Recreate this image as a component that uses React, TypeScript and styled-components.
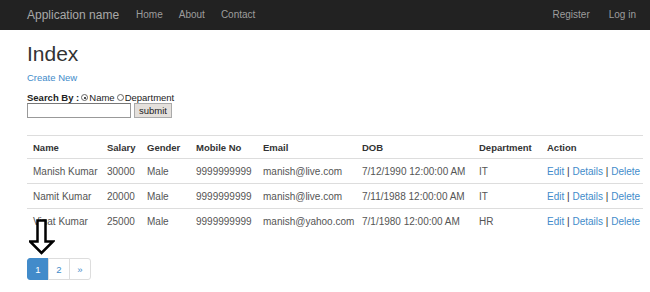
import * as React from 'react';
import styled, { createGlobalStyle } from 'styled-components';

const GlobalStyle = createGlobalStyle`
  body {
    margin: 0;
    background: #fff;
    font-family: "Liberation Sans", Arial, sans-serif;
    color: #333;
  }
`;

const NavBar = styled.div`
  display: flex;
  align-items: center;
  height: 30px;
  background: #222;
  padding: 0 14px 0 27px;
`;

const Brand = styled.span`
  font-size: 12px;
  color: #a9a9a9;
  margin-right: 17px;
`;

const NavLink = styled.span<{ $gap?: number }>`
  font-size: 10px;
  color: #9d9d9d;
  margin-right: ${(p) => p.$gap ?? 16}px;
  margin-top: -2px;
`;

const Spacer = styled.div`
  flex: 1;
`;

const Body = styled.div`
  position: relative;
  padding: 11px 7px 0 27px;
`;

const Title = styled.h1`
  margin: 0;
  font-size: 21px;
  font-weight: 400;
  line-height: 25px;
  color: #333;
`;

const Link = styled.a`
  color: #428bca;
  text-decoration: none;
  font-size: 10px;
`;

const CreateLink = styled(Link)`
  display: block;
  margin-top: 6px;
  line-height: 12px;
  font-size: 9.5px;
`;

const SearchForm = styled.div`
  margin-top: 8px;
  font-family: Arial, "Liberation Sans", sans-serif;
  font-size: 9.5px;
  color: #222;
`;

const SearchLine = styled.div`
  display: flex;
  align-items: center;
  height: 11px;
`;

const Label = styled.b`
  margin-right: 2px;
`;

const Radio = styled.span<{ $checked?: boolean; $gap?: number }>`
  display: inline-block;
  width: 7px;
  height: 7px;
  border: 1px solid #666;
  border-radius: 50%;
  margin: 0 1px 0 ${(p) => p.$gap ?? 0}px;
  position: relative;
  box-sizing: border-box;
  &::after {
    content: '';
    display: ${(p) => (p.$checked ? 'block' : 'none')};
    position: absolute;
    left: 1.5px;
    top: 1.5px;
    width: 2px;
    height: 2px;
    border-radius: 50%;
    background: #111;
  }
`;

const InputRow = styled.div`
  display: flex;
  gap: 3px;
`;

const TextBox = styled.div`
  width: 104px;
  height: 15px;
  box-sizing: border-box;
  border: 1px solid #999;
  border-top-color: #777;
  background: #fff;
`;

const Submit = styled.div`
  width: 38px;
  height: 15px;
  box-sizing: border-box;
  border: 1px solid #aaa;
  background: #e4e0dc;
  font-size: 9.5px;
  color: #222;
  text-align: center;
  line-height: 13px;
`;

const Table = styled.table`
  margin-top: 17px;
  border-collapse: collapse;
  width: 616px;
  table-layout: fixed;
  font-size: 10px;
  border-top: 1px solid #ddd;
`;

const Th = styled.th<{ $w: number }>`
  box-sizing: border-box;
  width: ${(p) => p.$w}px;
  text-align: left;
  font-weight: 700;
  font-size: 9.5px;
  color: #333;
  padding: 0 0 0 6px;
  height: 23px;
  border-bottom: 1px solid #ddd;
  white-space: nowrap;
`;

const Td = styled.td`
  padding: 0 0 0 6px;
  height: 24px;
  color: #555;
  white-space: nowrap;
  overflow: hidden;
`;

const Row = styled.tr<{ $last?: boolean }>`
  border-bottom: ${(p) => (p.$last ? 'none' : '1px solid #ddd')};
`;

const Sep = styled.span`
  color: #333;
`;

const Pager = styled.div`
  display: flex;
  margin-top: 25px;
`;

const PageBtn = styled.div<{ $active?: boolean; $first?: boolean; $last?: boolean }>`
  width: 22px;
  height: 22px;
  box-sizing: border-box;
  display: flex;
  align-items: center;
  justify-content: center;
  font-size: 9.5px;
  background: ${(p) => (p.$active ? '#428bca' : '#fff')};
  color: ${(p) => (p.$active ? '#fff' : '#428bca')};
  border: 1px solid ${(p) => (p.$active ? '#428bca' : '#ddd')};
  margin-left: ${(p) => (p.$first ? 0 : -1)}px;
  border-radius: ${(p) => (p.$first ? '3px 0 0 3px' : p.$last ? '0 3px 3px 0' : '0')};
`;

const Arrow = styled.svg`
  position: absolute;
  left: 29px;
  top: 189px;
`;

const columns = [
  { label: 'Name', w: 74 },
  { label: 'Salary', w: 40 },
  { label: 'Gender', w: 49 },
  { label: 'Mobile No', w: 67 },
  { label: 'Email', w: 99 },
  { label: 'DOB', w: 117 },
  { label: 'Department', w: 68 },
  { label: 'Action', w: 102 },
];

const rows = [
  ['Manish Kumar', '30000', 'Male', '9999999999', 'manish@live.com', '7/12/1990 12:00:00 AM', 'IT'],
  ['Namit Kumar', '20000', 'Male', '9999999999', 'manish@live.com', '7/11/1988 12:00:00 AM', 'IT'],
  ['Vinat Kumar', '25000', 'Male', '9999999999', 'manish@yahoo.com', '7/1/1980 12:00:00 AM', 'HR'],
];

export default function App() {
  return (
    <>
      <GlobalStyle />
      <NavBar>
        <Brand>Application name</Brand>
        <NavLink>Home</NavLink>
        <NavLink>About</NavLink>
        <NavLink>Contact</NavLink>
        <Spacer />
        <NavLink $gap={19}>Register</NavLink>
        <NavLink $gap={0}>Log in</NavLink>
      </NavBar>
      <Body>
        <Title>Index</Title>
        <CreateLink>Create New</CreateLink>
        <SearchForm>
          <SearchLine>
            <Label>Search By :</Label>
            <Radio $checked />
            Name
            <Radio $gap={2} />
            Department
          </SearchLine>
          <InputRow>
            <TextBox />
            <Submit>submit</Submit>
          </InputRow>
        </SearchForm>
        <Table>
          <thead>
            <tr>
              {columns.map((c) => (
                <Th key={c.label} $w={c.w}>
                  {c.label}
                </Th>
              ))}
            </tr>
          </thead>
          <tbody>
            {rows.map((r, i) => (
              <Row key={i} $last={i === rows.length - 1}>
                {r.map((cell, j) => (
                  <Td key={j}>{cell}</Td>
                ))}
                <Td>
                  <Link>Edit</Link> <Sep>|</Sep> <Link>Details</Link> <Sep>|</Sep>{' '}
                  <Link>Delete</Link>
                </Td>
              </Row>
            ))}
          </tbody>
        </Table>
        <Pager>
          <PageBtn $active $first>
            1
          </PageBtn>
          <PageBtn>2</PageBtn>
          <PageBtn $last>»</PageBtn>
        </Pager>
        <Arrow width="26" height="36" viewBox="0 0 26 36">
          <path
            d="M8.5 1.5 H16.5 V22.5 H24 L12.5 34 L1 22.5 H8.5 Z"
            fill="#fff"
            stroke="#000"
            strokeWidth="2.5"
            strokeLinejoin="miter"
          />
        </Arrow>
      </Body>
    </>
  );
}
